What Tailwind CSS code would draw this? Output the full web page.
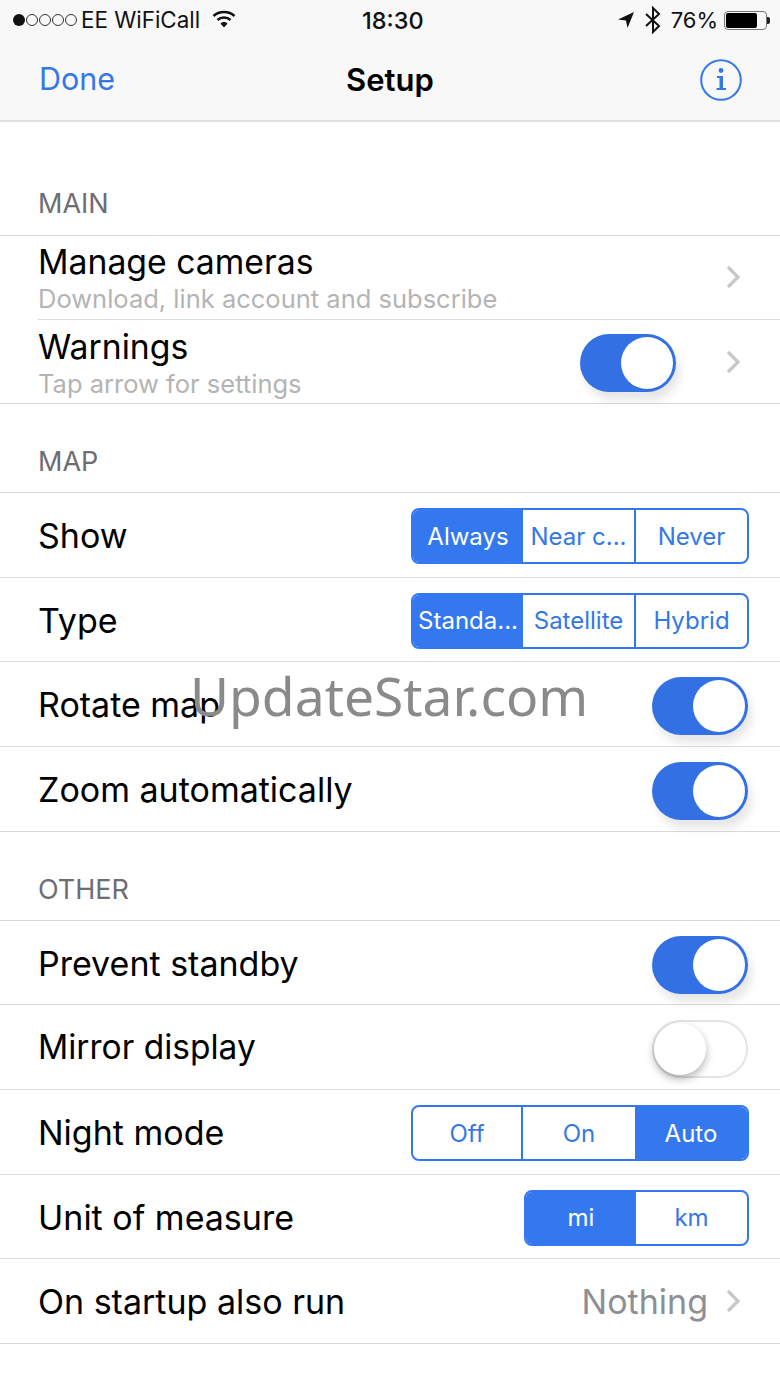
<!DOCTYPE html>
<html lang="en">
<head>
  <meta charset="utf-8">
  <title>Setup</title>
  <script src="https://cdn.jsdelivr.net/npm/@tailwindcss/browser@4"></script>
</head>
<body class="bg-white font-['Inter',sans-serif] text-black">
<div class="relative w-[780px] h-[1387px] overflow-hidden">

  <!-- Status bar + nav -->
  <div class="h-[122px] bg-[#f8f8f8] border-b-2 border-[#e0e0e0]">
    <div class="h-[40px] flex items-center justify-between relative pl-[13px] pr-[10px] text-[22px] text-[#111]">
      <div class="flex items-center">
        <div class="flex gap-[1px] items-center">
          <span class="w-[12px] h-[12px] rounded-full bg-[#111]"></span>
          <span class="w-[12px] h-[12px] rounded-full border border-[#333]"></span>
          <span class="w-[12px] h-[12px] rounded-full border border-[#333]"></span>
          <span class="w-[12px] h-[12px] rounded-full border border-[#333]"></span>
          <span class="w-[12px] h-[12px] rounded-full border border-[#333]"></span>
        </div>
        <span class="ml-[4px] text-[22.4px]">EE WiFiCall</span>
        <svg class="ml-[12px] -mt-[2px]" width="24" height="18" viewBox="0 0 24 18" fill="none" stroke="#111" stroke-width="2.6">
          <path d="M1.5 6 C7 0.6 17 0.6 22.5 6"/>
          <path d="M5.5 10 C9 6.6 15 6.6 18.5 10"/>
          <path d="M9 13.6 C10.6 12 13.4 12 15 13.6 L12 17 Z" fill="#111" stroke-width="1"/>
        </svg>
      </div>
      <span class="absolute left-[362px] top-[3px] text-[23.5px] font-medium">18:30</span>
      <div class="flex items-center">
        <svg width="18" height="18" viewBox="0 0 18 18"><path d="M17 1 L1 8.5 L9 9.5 L10.5 17 Z" fill="#111"/></svg>
        <svg class="ml-[9px]" width="18" height="28" viewBox="0 0 18 28" fill="none" stroke="#111" stroke-width="2"><path d="M2 8 L15 20 L9 26 L9 2 L15 8 L2 20"/></svg>
        <span class="ml-[9px]">76%</span>
        <div class="ml-[6px] w-[43px] h-[19px] rounded-[4px] border border-[#777] p-[1px]">
          <div class="w-[31px] h-full rounded-[2px] bg-black"></div>
        </div>
        <span class="w-[3px] h-[7px] bg-[#222] rounded-r-[2px]"></span>
      </div>
    </div>
    <div class="h-[80px] flex items-center justify-between relative pl-[39px] pr-[38px]">
      <span class="text-[30.5px] text-[#3478e6] -mt-[2px]">Done</span>
      <span class="absolute left-[346px] top-[17px] text-[31px] font-semibold">Setup</span>
      <svg width="42" height="42" viewBox="0 0 42 42">
        <circle cx="21" cy="21" r="19.8" fill="none" stroke="#3478e6" stroke-width="2"/>
        <circle cx="21" cy="11.5" r="2.4" fill="#3478e6"/>
        <path d="M17 17 H23 V29 H26 V31 H16.5 V29 H19.5 V19 H17 Z" fill="#3478e6"/>
      </svg>
    </div>
  </div>

  <!-- MAIN -->
  <div class="h-[113px] flex items-end pl-[38px] pb-[14px] text-[27px] leading-[34px] text-[#6d6d72]">MAIN</div>
  <div class="border-t border-[#d8d8d8]">
    <div class="h-[84px] relative flex items-center pl-[38px] pr-[38px]">
      <div class="flex-1 -mt-[1px]">
        <div class="text-[33.75px] leading-[42px]">Manage cameras</div>
        <div class="text-[25.5px] leading-[30px] text-[#b4b4b4] mt-[1px]">Download, link account and subscribe</div>
      </div>
      <svg class="-mt-[2px]" width="16" height="24" viewBox="0 0 16 24" fill="none" stroke="#c7c7cc" stroke-width="3.2"><path d="M2 2 L12 12 L2 22"/></svg>
      <div class="absolute left-[38px] right-0 bottom-0 h-px bg-[#dcdcdc]"></div>
    </div>
    <div class="h-[84px] flex items-center pl-[38px] pr-[38px] border-b border-[#d8d8d8]">
      <div class="flex-1 mt-[1px]">
        <div class="text-[33.75px] leading-[42px]">Warnings</div>
        <div class="text-[25.5px] leading-[30px] text-[#b4b4b4] mt-[1px]">Tap arrow for settings</div>
      </div>
      <div class="w-[96px] h-[58px] mt-[2px] rounded-full bg-[#3270e4] relative mr-[50px] shadow-[4px_8px_10px_rgba(0,0,0,0.1)]">
        <div class="absolute right-[3px] top-[3px] w-[52px] h-[52px] rounded-full bg-white"></div>
      </div>
      <svg width="16" height="24" viewBox="0 0 16 24" fill="none" stroke="#c7c7cc" stroke-width="3.2"><path d="M2 2 L12 12 L2 22"/></svg>
    </div>
  </div>

  <!-- MAP -->
  <div class="h-[88px] flex items-end pl-[38px] pb-[13px] text-[27px] leading-[34px] text-[#6d6d72]">MAP</div>
  <div class="border-t border-[#d8d8d8]">
    <div class="h-[85px] flex items-center justify-between pl-[38px] pr-[31px] border-b border-[#dcdcdc]">
      <span class="text-[34px] mt-[1px]">Show</span>
      <div class="flex w-[338px] h-[56px] mt-[2px] rounded-[8px] border-2 border-[#3478f0] text-[24px] text-[#3478e6] overflow-hidden">
        <span class="w-[110px] pt-[1px] flex items-center justify-center bg-[#3478f0] text-white">Always</span>
        <span class="w-[113px] pt-[1px] flex items-center justify-center border-r-2 border-[#3478f0]">Near c...</span>
        <span class="flex-1 pt-[1px] flex items-center justify-center">Never</span>
      </div>
    </div>
    <div class="h-[84px] flex items-center justify-between pl-[38px] pr-[31px] border-b border-[#dcdcdc]">
      <span class="text-[34px] mt-[1px]">Type</span>
      <div class="flex w-[338px] h-[56px] mt-[2px] rounded-[8px] border-2 border-[#3478f0] text-[24px] text-[#3478e6] overflow-hidden">
        <span class="w-[110px] pt-[1px] flex items-center justify-center bg-[#3478f0] text-white">Standa...</span>
        <span class="w-[113px] pt-[1px] flex items-center justify-center border-r-2 border-[#3478f0]">Satellite</span>
        <span class="flex-1 pt-[1px] flex items-center justify-center">Hybrid</span>
      </div>
    </div>
    <div class="h-[85px] flex items-center justify-between pl-[38px] pr-[32px] border-b border-[#dcdcdc]">
      <span class="text-[34px] mt-[1px]">Rotate map</span>
      <div class="w-[96px] h-[58px] mt-[4px] rounded-full bg-[#3270e4] relative shadow-[4px_8px_10px_rgba(0,0,0,0.1)]">
        <div class="absolute right-[3px] top-[3px] w-[52px] h-[52px] rounded-full bg-white"></div>
      </div>
    </div>
    <div class="h-[85px] flex items-center justify-between pl-[38px] pr-[32px] border-b border-[#d8d8d8]">
      <span class="text-[34px] mt-[1px]">Zoom automatically</span>
      <div class="w-[96px] h-[58px] mt-[4px] rounded-full bg-[#3270e4] relative shadow-[4px_8px_10px_rgba(0,0,0,0.1)]">
        <div class="absolute right-[3px] top-[3px] w-[52px] h-[52px] rounded-full bg-white"></div>
      </div>
    </div>
  </div>

  <!-- OTHER -->
  <div class="h-[88px] flex items-end pl-[38px] pb-[13px] text-[27px] leading-[34px] text-[#6d6d72]">OTHER</div>
  <div class="border-t border-[#d8d8d8]">
    <div class="h-[84px] flex items-center justify-between pl-[38px] pr-[32px] border-b border-[#dcdcdc]">
      <span class="text-[34px] mt-[1px]">Prevent standby</span>
      <div class="w-[96px] h-[58px] mt-[4px] rounded-full bg-[#3270e4] relative shadow-[4px_8px_10px_rgba(0,0,0,0.1)]">
        <div class="absolute right-[3px] top-[3px] w-[52px] h-[52px] rounded-full bg-white"></div>
      </div>
    </div>
    <div class="h-[85px] flex items-center justify-between pl-[38px] pr-[32px] border-b border-[#dcdcdc]">
      <span class="text-[33.5px] mt-[1px]">Mirror display</span>
      <div class="w-[96px] h-[58px] mt-[4px] rounded-full border-2 border-[#e4e4e4] bg-white relative">
        <div class="absolute left-0 top-[1px] w-[52px] h-[52px] rounded-full bg-white shadow-[0_4px_8px_rgba(0,0,0,0.3)]"></div>
      </div>
    </div>
    <div class="h-[85px] flex items-center justify-between pl-[38px] pr-[31px] border-b border-[#dcdcdc]">
      <span class="text-[34px] mt-[1px]">Night mode</span>
      <div class="flex w-[338px] h-[56px] mt-[2px] rounded-[8px] border-2 border-[#3478f0] text-[24px] text-[#3478e6] overflow-hidden">
        <span class="w-[110px] pt-[1px] flex items-center justify-center border-r-2 border-[#3478f0]">Off</span>
        <span class="w-[112px] pt-[1px] flex items-center justify-center">On</span>
        <span class="flex-1 pt-[1px] flex items-center justify-center bg-[#3478f0] text-white">Auto</span>
      </div>
    </div>
    <div class="h-[84px] flex items-center justify-between pl-[38px] pr-[31px] border-b border-[#dcdcdc]">
      <span class="text-[34px] mt-[1px]">Unit of measure</span>
      <div class="flex w-[225px] h-[56px] mt-[2px] rounded-[8px] border-2 border-[#3478f0] text-[24px] text-[#3478e6] overflow-hidden">
        <span class="w-[110px] pt-[1px] flex items-center justify-center bg-[#3478f0] text-white">mi</span>
        <span class="flex-1 pt-[1px] flex items-center justify-center">km</span>
      </div>
    </div>
    <div class="h-[85px] flex items-center pl-[38px] pr-[38px] border-b border-[#d8d8d8]">
      <span class="text-[34px] mt-[1px] flex-1">On startup also run</span>
      <span class="text-[34px] mt-[1px] text-[#8e8e93] mr-[18px]">Nothing</span>
      <svg width="16" height="24" viewBox="0 0 16 24" fill="none" stroke="#c7c7cc" stroke-width="3.2"><path d="M2 2 L12 12 L2 22"/></svg>
    </div>
  </div>

  <!-- Watermark -->
  <div class="absolute left-[190px] top-[662px] text-[53.4px] leading-[68px] text-[#8a8a8a] font-['Noto_Sans',sans-serif] font-normal whitespace-nowrap">UpdateStar.com</div>
</div>
</body>
</html>
